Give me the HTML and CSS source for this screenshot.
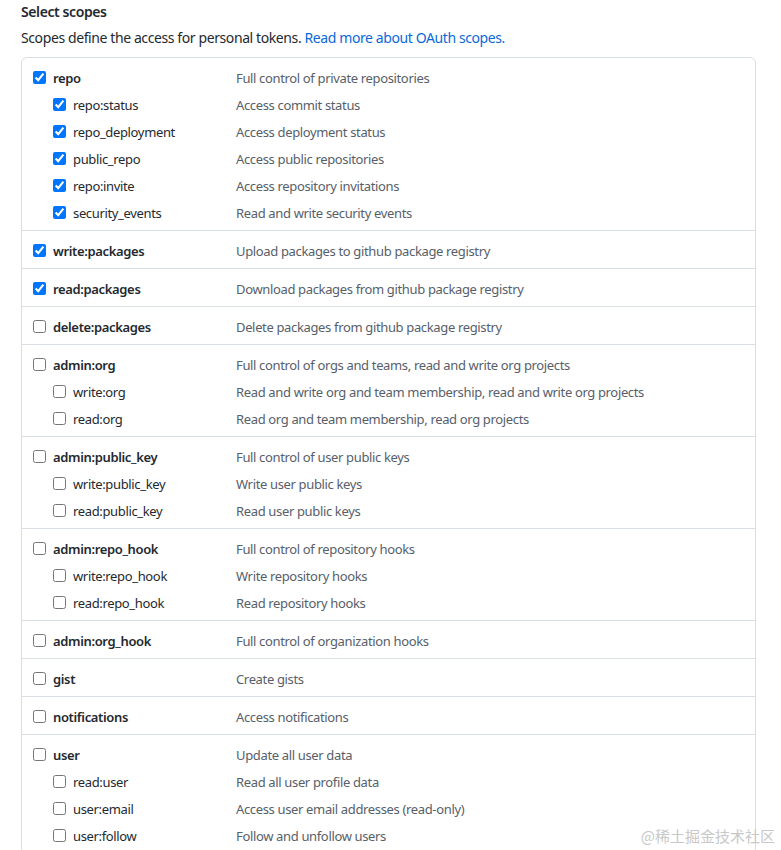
FILE: index.html
```html
<!DOCTYPE html>
<html>
<head>
<meta charset="utf-8">
<link rel="stylesheet" href="styles.css">
</head>
<body>
<div class="page">
  <h3 class="title">Select scopes</h3>
  <p class="intro">Scopes define the access for personal tokens. <a href="#" class="link">Read more about OAuth scopes.</a></p>
  <div class="scopes">
    <div class="group">
      <div class="row top"><label class="lbl"><input type="checkbox" checked><span>repo</span></label><span class="desc">Full control of private repositories</span></div>
      <div class="row sub"><label class="lbl"><input type="checkbox" checked><span>repo:status</span></label><span class="desc">Access commit status</span></div>
      <div class="row sub"><label class="lbl"><input type="checkbox" checked><span>repo_deployment</span></label><span class="desc">Access deployment status</span></div>
      <div class="row sub"><label class="lbl"><input type="checkbox" checked><span>public_repo</span></label><span class="desc">Access public repositories</span></div>
      <div class="row sub"><label class="lbl"><input type="checkbox" checked><span>repo:invite</span></label><span class="desc">Access repository invitations</span></div>
      <div class="row sub"><label class="lbl"><input type="checkbox" checked><span>security_events</span></label><span class="desc">Read and write security events</span></div>
    </div>
    <div class="group">
      <div class="row top"><label class="lbl"><input type="checkbox" checked><span>write:packages</span></label><span class="desc">Upload packages to github package registry</span></div>
    </div>
    <div class="group">
      <div class="row top"><label class="lbl"><input type="checkbox" checked><span>read:packages</span></label><span class="desc">Download packages from github package registry</span></div>
    </div>
    <div class="group">
      <div class="row top"><label class="lbl"><input type="checkbox"><span>delete:packages</span></label><span class="desc">Delete packages from github package registry</span></div>
    </div>
    <div class="group">
      <div class="row top"><label class="lbl"><input type="checkbox"><span>admin:org</span></label><span class="desc">Full control of orgs and teams, read and write org projects</span></div>
      <div class="row sub"><label class="lbl"><input type="checkbox"><span>write:org</span></label><span class="desc">Read and write org and team membership, read and write org projects</span></div>
      <div class="row sub"><label class="lbl"><input type="checkbox"><span>read:org</span></label><span class="desc">Read org and team membership, read org projects</span></div>
    </div>
    <div class="group">
      <div class="row top"><label class="lbl"><input type="checkbox"><span>admin:public_key</span></label><span class="desc">Full control of user public keys</span></div>
      <div class="row sub"><label class="lbl"><input type="checkbox"><span>write:public_key</span></label><span class="desc">Write user public keys</span></div>
      <div class="row sub"><label class="lbl"><input type="checkbox"><span>read:public_key</span></label><span class="desc">Read user public keys</span></div>
    </div>
    <div class="group">
      <div class="row top"><label class="lbl"><input type="checkbox"><span>admin:repo_hook</span></label><span class="desc">Full control of repository hooks</span></div>
      <div class="row sub"><label class="lbl"><input type="checkbox"><span>write:repo_hook</span></label><span class="desc">Write repository hooks</span></div>
      <div class="row sub"><label class="lbl"><input type="checkbox"><span>read:repo_hook</span></label><span class="desc">Read repository hooks</span></div>
    </div>
    <div class="group">
      <div class="row top"><label class="lbl"><input type="checkbox"><span>admin:org_hook</span></label><span class="desc">Full control of organization hooks</span></div>
    </div>
    <div class="group">
      <div class="row top"><label class="lbl"><input type="checkbox"><span>gist</span></label><span class="desc">Create gists</span></div>
    </div>
    <div class="group">
      <div class="row top"><label class="lbl"><input type="checkbox"><span>notifications</span></label><span class="desc">Access notifications</span></div>
    </div>
    <div class="group">
      <div class="row top"><label class="lbl"><input type="checkbox"><span>user</span></label><span class="desc">Update all user data</span></div>
      <div class="row sub"><label class="lbl"><input type="checkbox"><span>read:user</span></label><span class="desc">Read all user profile data</span></div>
      <div class="row sub"><label class="lbl"><input type="checkbox"><span>user:email</span></label><span class="desc">Access user email addresses (read-only)</span></div>
      <div class="row sub"><label class="lbl"><input type="checkbox"><span>user:follow</span></label><span class="desc">Follow and unfollow users</span></div>
    </div>
  </div>
</div>
<div class="watermark">@稀土掘金技术社区</div>
</body>
</html>
```
FILE: styles.css
```css
html, body {
  margin: 0;
  padding: 0;
  background: #ffffff;
  overflow: hidden;
}
body {
  font-family: "Segoe UI", "Noto Sans", sans-serif;
  font-size: 13px;
  letter-spacing: -0.35px;
  color: #24292f;
  height: 850px;
}
.page {
  padding: 0 25px 0 21px;
}
.title {
  margin: 0;
  padding-top: 3px;
  font-size: 14px;
  font-weight: 600;
  line-height: 18px;
  letter-spacing: -0.4px;
}
.intro {
  margin: 8px 0 10px;
  font-size: 14px;
  line-height: 18px;
  letter-spacing: -0.4px;
}
.link {
  color: #0969da;
  text-decoration: none;
}
.scopes {
  border: 1px solid #d8dee4;
  border-radius: 6px;
}
.group {
  padding: 6px 11px 4px;
  border-top: 1px solid #d8dee4;
}
.group:first-child {
  border-top: 0;
}
.row {
  display: flex;
  align-items: center;
  height: 27px;
}
.lbl {
  display: flex;
  align-items: center;
  width: 203px;
  flex: none;
}
.lbl input {
  width: 13px;
  height: 13px;
  margin: 0 7px 0 0;
  accent-color: #0075ff;
}
.top .lbl span {
  font-weight: 600;
}
.sub .lbl {
  padding-left: 20px;
  width: 183px;
}
.desc {
  color: #57606a;
}
.watermark {
  position: absolute;
  right: 6px;
  bottom: 4px;
  font-family: "Noto Sans CJK SC", sans-serif;
  font-size: 15px;
  letter-spacing: 0;
  color: #c8c8c8;
}
```
